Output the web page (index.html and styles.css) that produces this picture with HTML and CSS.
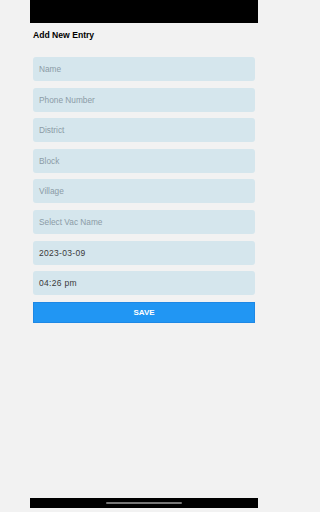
FILE: index.html
```html
<!DOCTYPE html>
<html>
<head>
<meta charset="utf-8">
<link rel="stylesheet" href="styles.css">
</head>
<body>
<div class="status"></div>
<div class="page">
  <div class="title">Add New Entry</div>
  <div class="form">
    <div class="field placeholder">Name</div>
    <div class="field placeholder">Phone Number</div>
    <div class="field placeholder">District</div>
    <div class="field placeholder">Block</div>
    <div class="field placeholder">Village</div>
    <div class="field placeholder">Select Vac Name</div>
    <div class="field value">2023-03-09</div>
    <div class="field value">04:26 pm</div>
    <div class="save">SAVE</div>
  </div>
</div>
<div class="home"><div class="indicator"></div></div>
</body>
</html>
```
FILE: styles.css
```css
html, body {
  margin: 0;
  padding: 0;
  background: #f2f2f2;
  font-family: "Liberation Sans", Arial, sans-serif;
}
body {
  width: 288px;
  height: 512px;
  display: flex;
  flex-direction: column;
}
.status {
  margin: 0 30px;
  height: 23px;
  background: #000;
}
.page {
  flex: 1;
  padding: 0 33px;
}
.title {
  margin-top: 7px;
  font-size: 8.6px;
  font-weight: bold;
  color: #000;
  height: 11px;
  line-height: 11px;
}
.form {
  margin-top: 16px;
  display: flex;
  flex-direction: column;
  gap: 6.6px;
}
.field {
  height: 24px;
  line-height: 24px;
  background: #d5e6ed;
  border-radius: 3px;
  padding: 0 6px;
  font-size: 8.3px;
}
.placeholder { color: #8b9ba6; }
.value {
  color: #3a3a3a;
  font-size: 8.5px;
  letter-spacing: 0.3px;
}
.save {
  height: 19px;
  line-height: 19px;
  background: #2196f3;
  border: 1px solid #1e88e5;
  color: #fff;
  font-size: 8px;
  font-weight: bold;
  text-align: center;
}
.home {
  margin: 0 30px 4px;
  height: 10px;
  background: #000;
  display: flex;
  align-items: center;
  justify-content: center;
}
.indicator {
  width: 76px;
  height: 2px;
  border-radius: 1px;
  background: #777;
}
```
